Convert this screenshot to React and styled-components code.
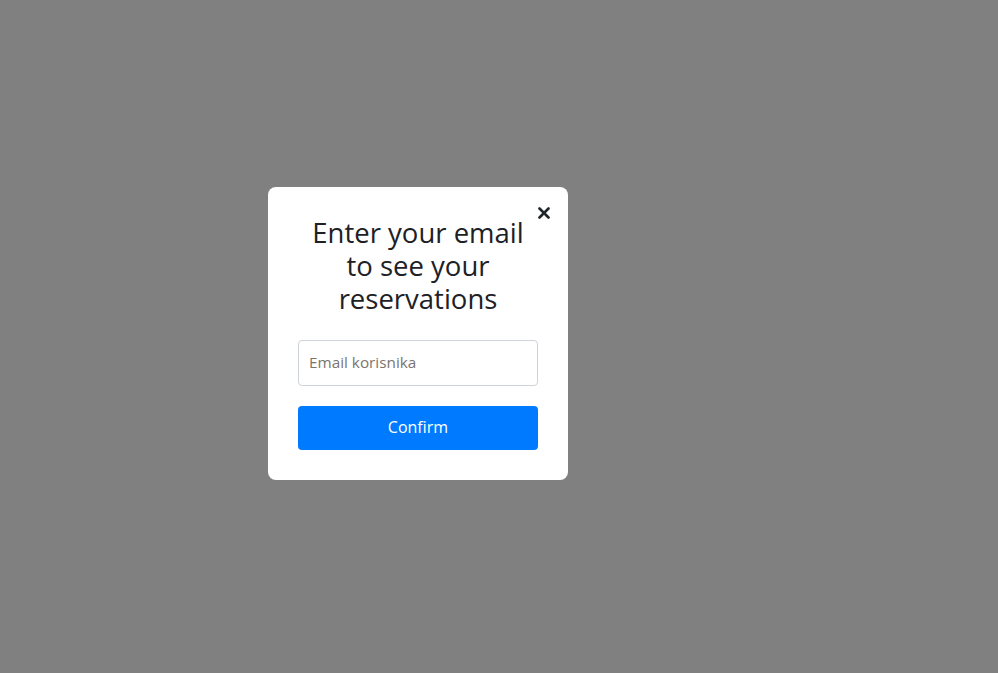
import React from 'react';
import styled, { createGlobalStyle } from 'styled-components';

const GlobalStyle = createGlobalStyle`
  html, body {
    margin: 0;
    padding: 0;
    background: #808080;
  }
  * {
    box-sizing: border-box;
  }
`;

const Overlay = styled.div`
  width: 100%;
  min-height: 673px;
  background: #808080;
  display: flex;
  align-items: flex-start;
  justify-content: flex-start;
  padding: 187px 0 0 268px;
  font-family: "Open Sans", "Noto Sans", sans-serif;
`;

const Modal = styled.div`
  position: relative;
  width: 300px;
  background: #fff;
  border-radius: 8px;
  padding: 30px;
  display: flex;
  flex-direction: column;
`;

const CloseButton = styled.button`
  position: absolute;
  top: 18px;
  right: 16px;
  width: 16px;
  height: 16px;
  padding: 0;
  border: none;
  background: none;
  cursor: pointer;
  display: flex;
  align-items: center;
  justify-content: center;
`;

const Title = styled.h2`
  margin: -1px 0 25px;
  padding: 0 4px;
  font-size: 27.5px;
  line-height: 33px;
  font-weight: 400;
  color: #1d2125;
  text-align: center;
`;

const Input = styled.input`
  width: 100%;
  height: 46px;
  border: 1px solid #ced4da;
  border-radius: 4px;
  padding: 0 10px 2px;
  font-family: inherit;
  font-size: 15.3px;
  color: #495057;
  outline: none;

  &::placeholder {
    color: #7a746e;
  }
`;

const ConfirmButton = styled.button`
  margin-top: 20px;
  width: 100%;
  height: 44px;
  border: none;
  border-radius: 4px;
  background: #007bff;
  color: #fff;
  font-family: inherit;
  font-size: 16px;
  padding: 0 0 2px;
  cursor: pointer;
`;

const App = () => {
  return (
    <>
      <GlobalStyle />
      <Overlay>
        <Modal>
          <CloseButton aria-label="Close">
            <svg width="12" height="12" viewBox="0 0 12 12">
              <path d="M1.5 1.5 L10.5 10.5 M10.5 1.5 L1.5 10.5" stroke="#212529" strokeWidth="2.6" strokeLinecap="round" />
            </svg>
          </CloseButton>
          <Title>Enter your email to see your reservations</Title>
          <Input type="email" placeholder="Email korisnika" />
          <ConfirmButton>Confirm</ConfirmButton>
        </Modal>
      </Overlay>
    </>
  );
};

export default App;
